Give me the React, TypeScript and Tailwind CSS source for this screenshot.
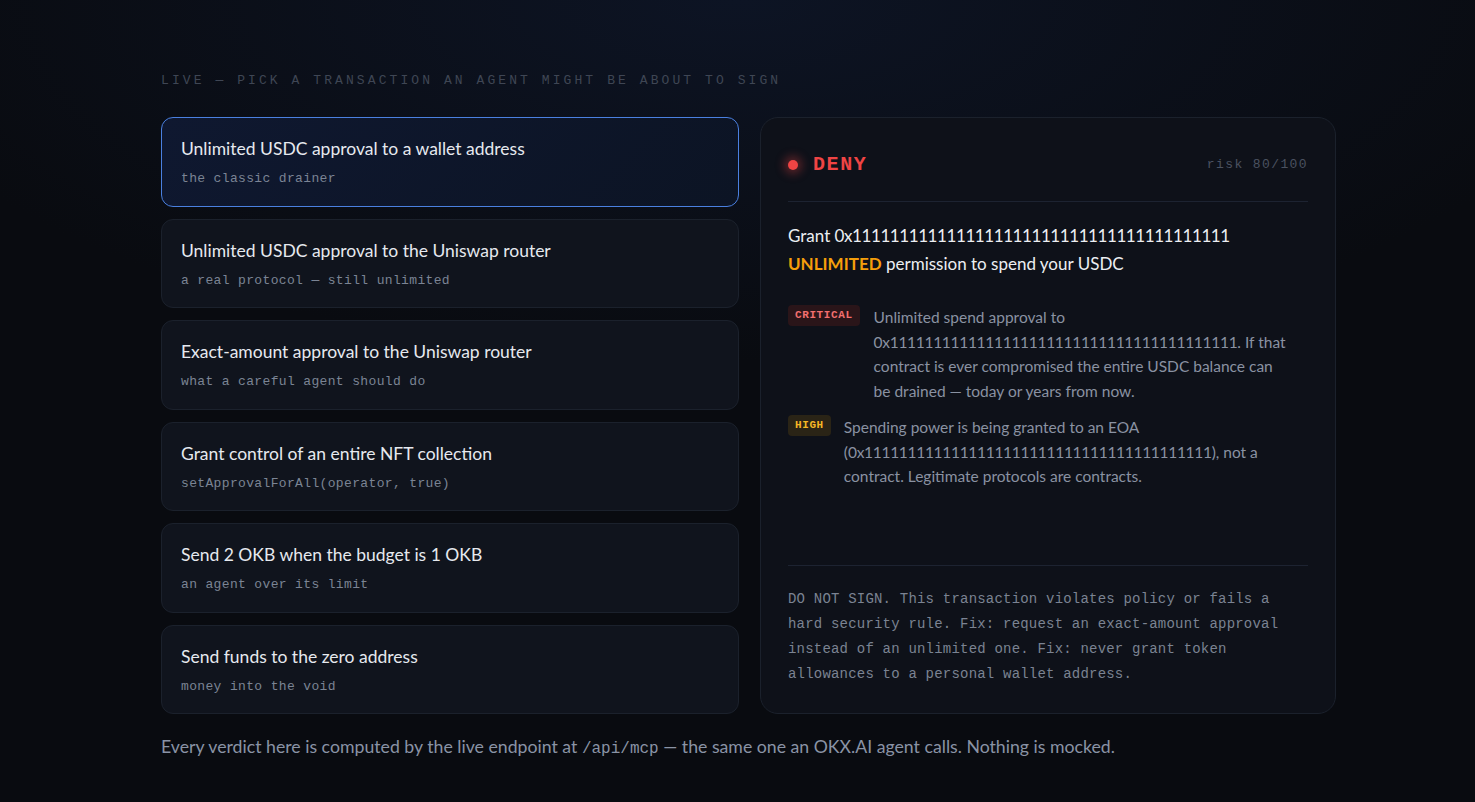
import React, { useState } from 'react';

const SANS = "font-['Lato','Noto_Sans',sans-serif]";
const MONO = "font-['Liberation_Mono','DejaVu_Sans_Mono',monospace]";

const scenarios = [
  { title: 'Unlimited USDC approval to a wallet address', sub: 'the classic drainer' },
  { title: 'Unlimited USDC approval to the Uniswap router', sub: 'a real protocol — still unlimited' },
  { title: 'Exact-amount approval to the Uniswap router', sub: 'what a careful agent should do' },
  { title: 'Grant control of an entire NFT collection', sub: 'setApprovalForAll(operator, true)' },
  { title: 'Send 2 OKB when the budget is 1 OKB', sub: 'an agent over its limit' },
  { title: 'Send funds to the zero address', sub: 'money into the void' },
];

const ADDR = '0x1111111111111111111111111111111111111111';

export default function App() {
  const [active, setActive] = useState(0);

  return (
    <div className={`min-h-[802px] w-full bg-[#090b10] bg-[radial-gradient(ellipse_60%_45%_at_50%_0%,#0d1424_0%,#090b10_100%)] ${SANS}`}>
      <div className="ml-[161px] w-[1175px] pt-[72px]">
        <div className={`${MONO} text-[13px] leading-[18px] tracking-[3.08px] text-[#3f4654]`}>
          LIVE — PICK A TRANSACTION AN AGENT MIGHT BE ABOUT TO SIGN
        </div>

        <div className="mt-[27px] grid grid-cols-[578px_576px] gap-[21px]">
          {/* scenario list */}
          <div className="flex flex-col gap-[12px]">
            {scenarios.map((s, i) => (
              <button
                key={s.title}
                onClick={() => setActive(i)}
                className={`flex h-[89.5px] flex-col rounded-xl border px-[19px] pt-[19px] text-left ${
                  i === active
                    ? 'border-[#4a80e0] bg-[linear-gradient(135deg,#0f1830,#0c1424)]'
                    : 'border-[#1b212c] bg-[#10141d]'
                }`}
              >
                <span className="text-[17.5px] leading-[24px] text-[#e6e9ef]">{s.title}</span>
                <span className={`${MONO} mt-[8px] text-[13px] leading-[20px] tracking-[0.35px] text-[#7b8494]`}>{s.sub}</span>
              </button>
            ))}
          </div>

          {/* verdict panel */}
          <div className="flex flex-col rounded-[18px] border border-[#1b212c] bg-[#0e1119] px-[27px]">
            <div className="flex h-[83px] items-center justify-between pt-[11px]">
              <div className="flex items-center gap-[15px]">
                <span className="h-[10px] w-[10px] rounded-full bg-[#ef4444] shadow-[0_0_10px_4px_rgba(239,68,68,0.35)]" />
                <span className={`${MONO} text-[20px] font-bold tracking-[1.6px] text-[#ef4444]`}>DENY</span>
              </div>
              <span className={`${MONO} text-[13px] tracking-[1.4px] text-[#4b5260]`}>risk 80/100</span>
            </div>
            <div className="h-px bg-[#1d2331]" />

            <p className="mt-[20px] text-[17px] leading-[28px] text-[#eceef2]">
              Grant <span className="tracking-[-0.42px]">{ADDR}</span>
              <br />
              <span className="font-bold text-[#f59e0b]">UNLIMITED</span> permission to spend your USDC
            </p>

            <div className="mt-[27px] flex flex-col gap-[12px]">
              <div className="flex items-start gap-[14px]">
                <span className={`${MONO} flex h-[21px] shrink-0 items-center rounded-[4px] bg-[#2a1519] px-[7px] text-[11px] font-bold tracking-[0.6px] text-[#f26f6f]`}>
                  CRITICAL
                </span>
                <p className="pr-[16px] text-[15.5px] leading-[24.5px] text-[#8a92a2]">
                  Unlimited spend approval to <span className="tracking-[-0.3px]">{ADDR}</span>. If that contract is ever compromised the entire USDC balance can be drained — today or years from now.
                </p>
              </div>
              <div className="flex items-start gap-[13px]">
                <span className={`${MONO} flex h-[21px] shrink-0 items-center rounded-[4px] bg-[#2a2416] px-[7px] text-[11px] font-bold tracking-[0.6px] text-[#f5b625]`}>
                  HIGH
                </span>
                <p className="pr-[16px] text-[15.5px] leading-[24.5px] text-[#8a92a2]">
                  Spending power is being granted to an EOA (<span className="tracking-[-0.3px]">{ADDR}</span>), not a contract. Legitimate protocols are contracts.
                </p>
              </div>
            </div>

            <div className="flex-1" />
            <div className="h-px bg-[#1d2331]" />
            <p className={`${MONO} mb-[26px] mt-[21px] text-[14px] leading-[25px] tracking-[0.2px] text-[#7b8392]`}>
              DO NOT SIGN. This transaction violates policy or fails a hard security rule. Fix: request an exact-amount approval instead of an unlimited one. Fix: never grant token allowances to a personal wallet address.
            </p>
          </div>
        </div>

        <p className="mt-[21px] text-[17.7px] leading-[24px] text-[#8a93a5]">
          Every verdict here is computed by the live endpoint at <span className={`${MONO} text-[16px]`}>/api/mcp</span> — the same one an OKX.AI agent calls. Nothing is mocked.
        </p>
      </div>
    </div>
  );
}
